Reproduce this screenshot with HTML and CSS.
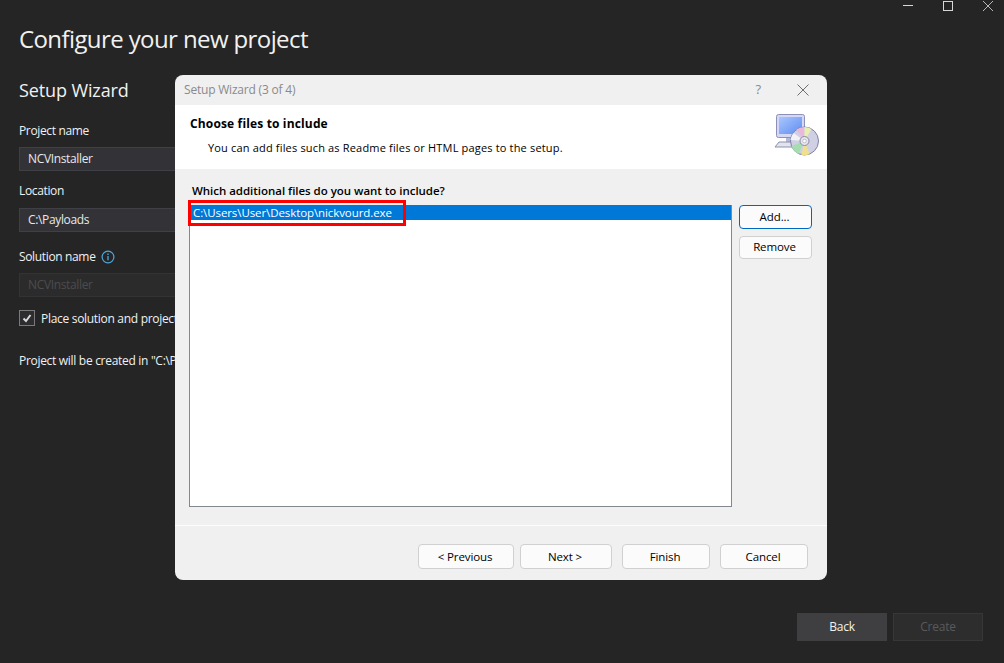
FILE: index.html
```html
<!DOCTYPE html>
<html lang="en">
<head>
<meta charset="utf-8">
<title>Configure your new project</title>
<link rel="stylesheet" href="styles.css">
</head>
<body>
<div class="app">
  <div class="winbar">
    <svg class="winicon" width="12" height="12" viewBox="0 0 12 12"><path d="M1 5.5H11" stroke="#d8d8d8" fill="none"/></svg>
    <svg class="winicon" width="12" height="12" viewBox="0 0 12 12"><rect x="1.500" y="1.500" width="9" height="9" stroke="#d8d8d8" fill="none"/></svg>
    <svg class="winicon" width="12" height="12" viewBox="0 0 12 12"><path d="M1 1L11 11M11 1L1 11" stroke="#b8b8b8" fill="none"/></svg>
  </div>
  <h1 class="title">Configure your new project</h1>
  <h2 class="subtitle">Setup Wizard</h2>
  <div class="label">Project name</div>
  <div class="field">NCVInstaller</div>
  <div class="label label-loc">Location</div>
  <div class="field">C:\Payloads</div>
  <div class="label label-sol">Solution name
    <svg class="info" width="14" height="14" viewBox="0 0 14 14"><circle cx="7" cy="7" r="5.900" fill="none" stroke="#4fa8dc" stroke-width="1.200"/><path d="M7 6v4.200M7 3.600v1.300" stroke="#4fa8dc" stroke-width="1.300"/></svg>
  </div>
  <div class="field field-off">NCVInstaller</div>
  <div class="check-row">
    <span class="check"><svg width="14" height="14" viewBox="0 0 14 14"><path d="M3.500 7.500L6 10L10.500 4" fill="none" stroke="#d8d8d8" stroke-width="2"/></svg></span>
    <span>Place solution and project in the same directory</span>
  </div>
  <div class="created">Project will be created in "C:\Payloads\NCVInstaller\"</div>
  <div class="actions">
    <div class="act">Back</div>
    <div class="act act-off">Create</div>
  </div>
</div>

<div class="dialog">
  <div class="dlg-title">
    <span class="dlg-name">Setup Wizard (3 of 4)</span>
    <span class="dlg-help">?</span>
    <svg class="dlg-close" width="12" height="12" viewBox="0 0 12 12"><path d="M.5 .5L11.500 11.500M11.500 .5L.5 11.500" stroke="#6e6e6e" fill="none"/></svg>
  </div>
  <div class="dlg-head">
    <div>
      <div class="head-title">Choose files to include</div>
      <div class="head-sub">You can add files such as Readme files or HTML pages to the setup.</div>
    </div>
    <svg class="head-icon" width="46" height="44" viewBox="0 0 46 44">
      <defs>
        <linearGradient id="scr" x1="0" y1="0" x2="1" y2="1"><stop offset="0" stop-color="#a9c6ff"/><stop offset="1" stop-color="#5f8df0"/></linearGradient>
      </defs>
      <rect x="2.500" y="1.500" width="28" height="23" rx="2" fill="#d5d8f2" stroke="#8d90b8"/>
      <rect x="5" y="4" width="23" height="17" fill="url(#scr)"/>
      <rect x="12" y="25" width="10" height="5" fill="#b5b8d6"/>
      <path d="M1 34L5 29H20V34H3Z" fill="#e2e3ee" stroke="#8d90a8"/>
      <circle cx="30.500" cy="28" r="14" fill="#cfd0e4" stroke="#7f80a8"/>
      <path d="M30.500 28L22.500 16.500A14 14 0 0 1 30.500 14Z" fill="#e9b8dc"/>
      <path d="M30.500 28L30.500 14A14 14 0 0 1 37.500 16Z" fill="#e8efb0"/>
      <path d="M30.500 28L24.500 41A14 14 0 0 1 17.500 33Z" fill="#a6dcb0"/>
      <path d="M30.500 28L35.500 41A14 14 0 0 1 27.500 42Z" fill="#f0e08c"/>
      <path d="M30.500 28L16.500 27A14 14 0 0 1 19.500 20Z" fill="#f2f2f6"/>
      <circle cx="30.500" cy="28" r="4.500" fill="#e6e6ee" stroke="#8a8aa0"/>
      <circle cx="30.500" cy="28" r="1.800" fill="#fff" stroke="#a0a0b0" stroke-width=".6"/>
    </svg>
  </div>
  <div class="dlg-body">
    <div class="question">Which additional files do you want to include?</div>
    <div class="list-row">
      <div class="listbox">
        <div class="list-item">C:\Users\User\Desktop\nickvourd.exe</div>
      </div>
      <div class="side">
        <div class="btn btn-primary">Add...</div>
        <div class="btn">Remove</div>
      </div>
    </div>
  </div>
  <div class="dlg-foot">
    <div class="btn btn-prev">&lt; Previous</div>
    <div class="btn btn-next">Next &gt;</div>
    <div class="btn btn-fin">Finish</div>
    <div class="btn btn-fin">Cancel</div>
  </div>
</div>
<div class="redbox"></div>
</body>
</html>
```

FILE: styles.css
```css
* { box-sizing: border-box; }
html, body { margin: 0; padding: 0; height: 100%; }
body {
  width: 1004px;
  height: 663px;
  overflow: hidden;
  background: #252526;
  font-family: "Open Sans", "Noto Sans", sans-serif;
  font-size: 12px;
  color: #f1f1f1;
  position: relative;
}
.app { padding: 0 0 0 19px; height: 663px; position: relative; }
.winbar {
  position: absolute; top: 0; right: 0;
  display: flex; height: 12px; width: 104px;
  justify-content: space-between; padding: 0 10px 0 2px;
}
.winicon { display: block; width: 12px; height: 12px; }
.title {
  margin: 0; padding-top: 21px;
  font-size: 24px; font-weight: 400; line-height: 36px; height: 57px;
  letter-spacing: -.6px;
}
.subtitle {
  margin: 21px 0 0; font-size: 18px; font-weight: 400; line-height: 24px;
  letter-spacing: -.12px;
}
.label { margin-top: 20px; height: 18px; line-height: 18px; letter-spacing: -.35px; display: flex; align-items: center; gap: 5px; }
.label-loc { margin-top: 11px; }
.label-sol { margin-top: 16px; }
.field {
  margin-top: 7px; width: 320px; height: 24px; line-height: 22px;
  padding-left: 8px; background: #333337; border: 1px solid #3f3f46;
  letter-spacing: -.35px; color: #e8e8e8;
}
.label-loc + .field { margin-top: 8px; }
.label-sol + .field { margin-top: 7px; }
.field-off { background: #2b2b2c; border-color: #333336; color: #4c4c4e; }
.check-row { display: flex; align-items: center; gap: 6px; margin-top: 13px; height: 16px; letter-spacing: -.3px; }
.check { width: 16px; height: 16px; border: 1px solid #7a7a7a; background: #2d2d30; display: flex; align-items: center; justify-content: center; }
.created { margin-top: 26px; line-height: 18px; letter-spacing: -.3px; }
.actions { position: absolute; left: 797px; top: 613px; display: flex; gap: 6px; }
.act {
  width: 90px; height: 28px; line-height: 28px; text-align: center;
  background: #3f3f41; color: #f1f1f1; letter-spacing: -.2px;
}
.act-off { background: #2d2d2e; border: 1px solid #37373a; line-height: 26px; color: #5a5a5c; }

.dialog {
  position: absolute; left: 175px; top: 75px; width: 652px; height: 505px;
  background: #f0f0f0; border-radius: 8px; overflow: hidden;
  color: #000; display: flex; flex-direction: column;
}
.dlg-title { height: 30px; flex: none; display: flex; align-items: center; padding: 0 18px 2px 9px; }
.dlg-name { color: #8a8a8a; letter-spacing: -.2px; flex: 1; }
.dlg-help { color: #8a8a8a; font-size: 13px; margin-right: 36px; }
.dlg-close { margin-top: 2px; }
.dlg-head {
  height: 64px; flex: none; background: #fff; display: flex;
  justify-content: space-between; padding: 10px 7px 0 15px;
}
.head-title { font-weight: 700; font-size: 12px; line-height: 17px; letter-spacing: .15px; }
.head-sub { margin: 8px 0 0 18px; font-size: 11px; line-height: 15px; letter-spacing: .17px; }
.head-icon { margin-top: -2px; }
.dlg-body { flex: 1; padding: 14px 15px 0 14px; border-bottom: 1px solid #fdfdfd; }
.question { font-weight: 600; font-size: 11.500px; line-height: 16px; padding-left: 3px; letter-spacing: -.03px; }
.list-row { display: flex; gap: 7px; margin-top: 6px; }
.listbox { width: 543px; height: 302px; background: #fff; border: 1px solid #828790; border-top: 0; }
.list-item {
  height: 15px; line-height: 15px; background: #0078d7; color: #fff;
  padding-left: 3px; font-size: 11.500px; letter-spacing: -.09px;
}
.side { display: flex; flex-direction: column; gap: 7px; width: 73px; }
.btn {
  height: 23px; line-height: 20px; text-align: center; font-size: 11.500px;
  background: #fbfbfb; border: 1px solid #d0d0d0; border-radius: 4px; letter-spacing: -.1px;
  padding-right: 2px;
}
.btn-primary { border-color: #0067c0; height: 24px; line-height: 21px; }
.dlg-foot { height: 54px; flex: none; display: flex; padding: 18px 0 0 243px; }
.dlg-foot .btn { height: 25px; line-height: 23px; }
.btn-prev { width: 96px; margin-right: 6px; }
.btn-next { width: 92px; margin-right: 10px; }
.btn-fin { width: 88px; margin-right: 10px; }
.redbox { position: absolute; left: 188px; top: 200px; width: 218px; height: 26px; border: 3px solid #f00; }
```
